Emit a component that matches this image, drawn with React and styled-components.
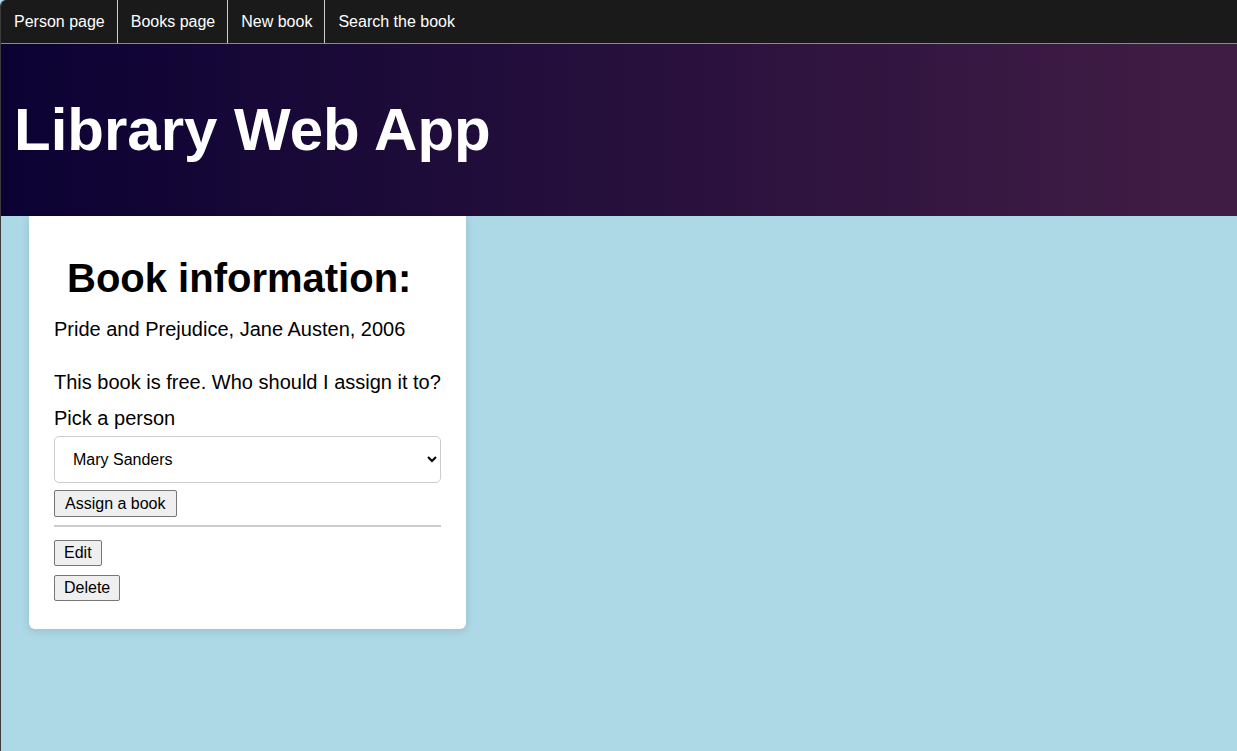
import styled, { createGlobalStyle } from 'styled-components';

const GlobalStyle = createGlobalStyle`
  html, body {
    margin: 0;
    padding: 0;
    background: #add8e6;
  }
  body {
    font-family: "Liberation Sans", Arial, sans-serif;
  }
`

const Page = styled.div`
  min-height: 751px;
  background: #add8e6;
  border-left: 1px solid #3c3c3c;
  box-sizing: border-box;
  border-top-left-radius: 6px;
  overflow: hidden;
`

const NavBar = styled.nav`
  display: flex;
  height: 43px;
  background: #1a1a1a;
  border-bottom: 1px solid #8a8a8a;
`

const NavLink = styled.a`
  display: flex;
  align-items: center;
  padding: 0 12px 0 13px;
  color: #ffffff;
  font-size: 16px;
  text-decoration: none;
  border-right: ${props => (props.last ? 'none' : '1px solid #cfcfcf')};
`

const Header = styled.header`
  height: 172px;
  box-sizing: border-box;
  padding: 49px 13px 0;
  background: linear-gradient(to right, #0b0233 0%, #3f1c44 95%);
`

const Title = styled.h1`
  margin: 0;
  color: #ffffff;
  font-size: 60px;
  line-height: 74px;
  font-weight: bold;
`

const Main = styled.main`
  display: flex;
  align-items: flex-start;
  padding: 0 28px;
`

const Card = styled.section`
  width: 437px;
  box-sizing: border-box;
  padding: 25px 25px 28px;
  background: #ffffff;
  border-radius: 0 0 6px 6px;
  box-shadow: 0 2px 8px rgba(0, 0, 0, 0.12);
  display: flex;
  flex-direction: column;
  align-items: flex-start;
`

const CardTitle = styled.h2`
  margin: 14px 0 17px;
  padding-left: 13px;
  font-size: 40px;
  line-height: 46px;
  font-weight: bold;
  color: #000000;
`

const Text = styled.p`
  margin: 0 0 ${props => props.gap || 0}px;
  font-size: 20px;
  line-height: 23px;
  color: #000000;
`

const Select = styled.select`
  width: 100%;
  height: 47px;
  padding: 0 14px;
  border: 1px solid #cccccc;
  border-radius: 5px;
  background: #ffffff;
  font-family: "Liberation Sans", Arial, sans-serif;
  font-size: 16px;
  color: #000000;
`

const Button = styled.button`
  margin-top: ${props => props.top || 0}px;
  height: ${props => props.h || 26}px;
  padding: 1px ${props => props.px || 9}px;
  border: 1px solid #767676;
  border-radius: 2px;
  background: #efefef;
  font-family: "Liberation Sans", Arial, sans-serif;
  font-size: 16px;
  color: #000000;
`

const Divider = styled.hr`
  width: 100%;
  height: 2px;
  margin: 8px 0 13px;
  border: none;
  background: #cccccc;
`

function App() {
  return (
    <Page>
      <GlobalStyle />
      <NavBar>
        <NavLink href="#">Person page</NavLink>
        <NavLink href="#">Books page</NavLink>
        <NavLink href="#">New book</NavLink>
        <NavLink href="#" last>Search the book</NavLink>
      </NavBar>
      <Header>
        <Title>Library Web App</Title>
      </Header>
      <Main>
        <Card>
          <CardTitle>Book information:</CardTitle>
          <Text gap={30}>Pride and Prejudice, Jane Austen, 2006</Text>
          <Text gap={13}>This book is free. Who should I assign it to?</Text>
          <Text gap={6}>Pick a person</Text>
          <Select defaultValue="mary">
            <option value="mary">Mary Sanders</option>
          </Select>
          <Button top={7} h={27} px={10}>Assign a book</Button>
          <Divider />
          <Button>Edit</Button>
          <Button top={9}>Delete</Button>
        </Card>
      </Main>
    </Page>
  );
}

export default App;
